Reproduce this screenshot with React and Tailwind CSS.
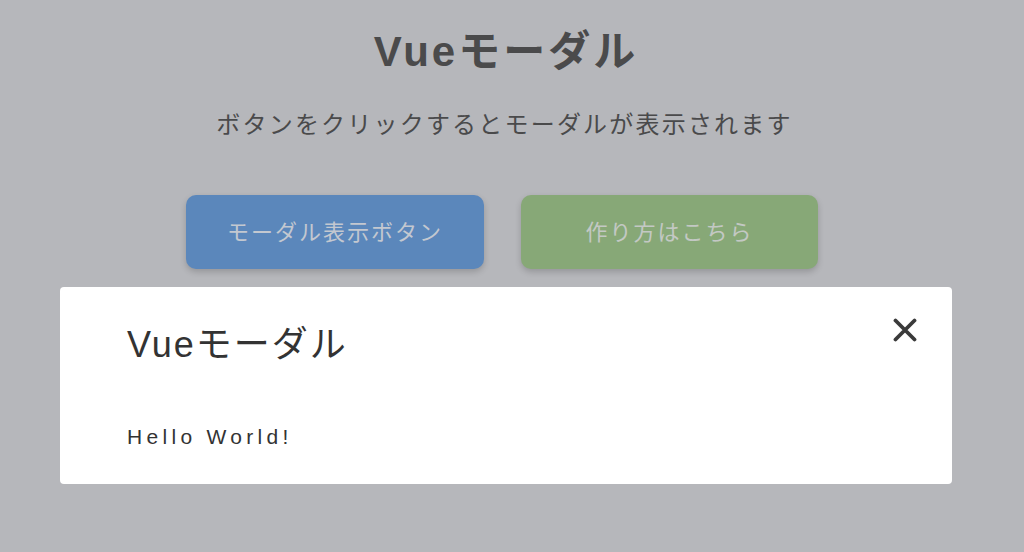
export default function App() {
  const font = { fontFamily: '"Liberation Sans", "Noto Sans CJK JP", sans-serif' };
  return (
    <div className="relative w-[1024px] h-[552px] bg-[#b6b7bb] overflow-hidden" style={font}>
      <div className="flex flex-col items-center pt-[23px]">
        <h1 className="mr-[12px] text-[42px] leading-[58px] font-bold text-[#4a4a4b] tracking-[3px]">Vueモーダル</h1>
        <p className="mt-[28px] mr-[15px] text-[24px] leading-[32px] text-[#4a4a4b] tracking-[2.2px]">ボタンをクリックするとモーダルが表示されます</p>
        <div className="mt-[54px] mr-[20px] flex gap-[37px]">
          <button className="w-[298px] h-[74px] rounded-[10px] bg-[#5b87bb] text-[#c3c8d0] text-[22px] tracking-[2px] shadow-[0_3px_6px_rgba(0,0,0,0.18)]">モーダル表示ボタン</button>
          <button className="w-[297px] h-[74px] rounded-[10px] bg-[#87a877] text-[#c3c8c4] text-[22px] tracking-[2px] shadow-[0_3px_6px_rgba(0,0,0,0.18)]">作り方はこちら</button>
        </div>
      </div>
      <div className="absolute left-[60px] top-[287px] w-[892px] h-[197px] bg-white rounded-[4px] pl-[67px] pt-[36px]">
        <h2 className="text-[36px] leading-[44px] text-[#333333] tracking-[2px]">Vueモーダル</h2>
        <p className="mt-[56px] text-[21px] leading-[28px] text-[#333333] tracking-[4.3px]">Hello World!</p>
        <button className="absolute right-[34px] top-[30px] w-[26px] h-[26px] flex items-center justify-center">
          <svg width="24" height="24" viewBox="0 0 24 24">
            <path d="M2.5 2.5 L21.5 21.5 M21.5 2.5 L2.5 21.5" stroke="#3a3a3a" strokeWidth="3.8" strokeLinecap="round" />
          </svg>
        </button>
      </div>
    </div>
  );
}
